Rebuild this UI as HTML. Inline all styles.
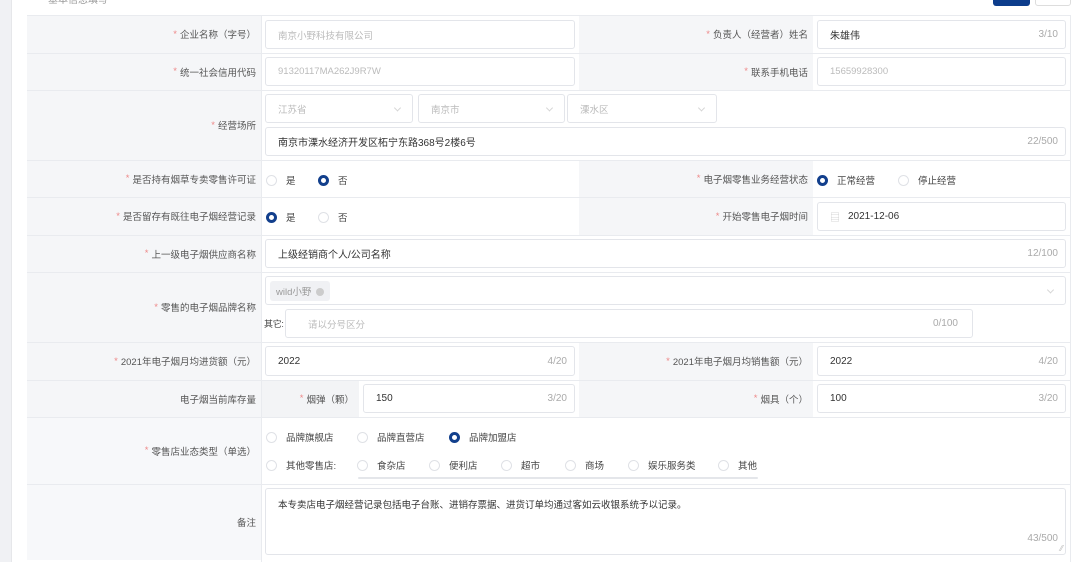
<!DOCTYPE html>
<html><head><meta charset="utf-8"><style>
*{margin:0;padding:0;box-sizing:border-box}
body{width:1080px;height:562px;overflow:hidden;background:#fff;font-family:"Liberation Sans","Noto Sans CJK SC",sans-serif;font-size:10px;color:#333;position:relative}
.a{position:absolute}
.lb{position:absolute;background:#f5f6f8;display:flex;align-items:center;justify-content:flex-end;padding-right:5px;color:#555;font-size:9.5px;white-space:nowrap}
.st{color:#e88;margin-right:3px}
.hl{position:absolute;height:1px;background:#e9ebef}
.vl{position:absolute;width:1px;background:#e9ebef}
.in{position:absolute;background:#fff;border:1px solid #e3e5ea;border-radius:3px;display:flex;align-items:center;padding:0 12px;font-size:10px;color:#333}
.ph{color:#bbb;font-size:9.5px}
.cnt{position:absolute;right:7px;color:#aaa;font-size:10px}
.chev{position:absolute;right:12px;top:50%;width:5px;height:5px;border-right:1px solid #d6d6d6;border-bottom:1px solid #d6d6d6;transform:translateY(-70%) rotate(45deg)}
.r{position:absolute;display:flex;align-items:center;font-size:9.5px;color:#444;white-space:nowrap}
.r i{display:inline-block;width:11px;height:11px;border-radius:50%;border:1px solid #dfe1e6;margin-right:9px;background:#fff}
.r i.on{border:3.5px solid #123f8c;background:#fff}
</style></head><body>
<div class="a" style="left:0;top:0;width:11px;height:562px;background:#f0f1f4"></div>
<div class="vl" style="left:11px;top:0;height:562px;background:#e6e7ea"></div>
<div class="a" style="left:48px;top:-9px;font-size:10px;color:#999">基本信息填写</div>
<div class="a" style="left:993px;top:-4px;width:37px;height:10px;background:#0d3d8c;border-radius:3px"></div>
<div class="a" style="left:1035px;top:-4px;width:36px;height:10px;border:1px solid #ddd;border-radius:3px"></div>

<div class="lb" style="left:27px;top:15px;width:234px;height:38px"><span class="st">*</span>企业名称（字号）</div>
<div class="lb" style="left:579px;top:15px;width:234px;height:38px"><span class="st">*</span>负责人（经营者）姓名</div>
<div class="lb" style="left:27px;top:53px;width:234px;height:37px"><span class="st">*</span>统一社会信用代码</div>
<div class="lb" style="left:579px;top:53px;width:234px;height:37px"><span class="st">*</span>联系手机电话</div>
<div class="lb" style="left:27px;top:90px;width:234px;height:70px"><span class="st">*</span>经营场所</div>
<div class="lb" style="left:27px;top:160px;width:234px;height:37px"><span class="st">*</span>是否持有烟草专卖零售许可证</div>
<div class="lb" style="left:579px;top:160px;width:234px;height:37px"><span class="st">*</span>电子烟零售业务经营状态</div>
<div class="lb" style="left:27px;top:197px;width:234px;height:38px"><span class="st">*</span>是否留存有既往电子烟经营记录</div>
<div class="lb" style="left:579px;top:197px;width:234px;height:38px"><span class="st">*</span>开始零售电子烟时间</div>
<div class="lb" style="left:27px;top:235px;width:234px;height:37px"><span class="st">*</span>上一级电子烟供应商名称</div>
<div class="lb" style="left:27px;top:272px;width:234px;height:70px"><span class="st">*</span>零售的电子烟品牌名称</div>
<div class="lb" style="left:27px;top:342px;width:234px;height:38px"><span class="st">*</span>2021年电子烟月均进货额（元）</div>
<div class="lb" style="left:579px;top:342px;width:234px;height:38px"><span class="st">*</span>2021年电子烟月均销售额（元）</div>
<div class="lb" style="left:27px;top:380px;width:234px;height:37px">电子烟当前库存量</div>
<div class="lb" style="left:261px;top:380px;width:98px;height:37px;background:#f3f4f6"><span class="st">*</span>烟弹（颗）</div>
<div class="lb" style="left:579px;top:380px;width:234px;height:37px"><span class="st">*</span>烟具（个）</div>
<div class="lb" style="left:27px;top:417px;width:234px;height:67px;background:#f7f8fa"><span class="st">*</span>零售店业态类型（单选）</div>
<div class="lb" style="left:27px;top:484px;width:234px;height:76px;background:#f7f8fa">备注</div>

<div class="hl" style="left:27px;top:15px;width:1044px"></div>
<div class="hl" style="left:27px;top:53px;width:1044px"></div>
<div class="hl" style="left:27px;top:90px;width:1044px"></div>
<div class="hl" style="left:27px;top:160px;width:1044px"></div>
<div class="hl" style="left:27px;top:197px;width:1044px"></div>
<div class="hl" style="left:27px;top:235px;width:1044px"></div>
<div class="hl" style="left:27px;top:272px;width:1044px"></div>
<div class="hl" style="left:27px;top:342px;width:1044px"></div>
<div class="hl" style="left:27px;top:380px;width:1044px"></div>
<div class="hl" style="left:27px;top:417px;width:1044px"></div>
<div class="hl" style="left:27px;top:484px;width:1044px"></div>
<div class="vl" style="left:261px;top:15px;height:547px"></div>
<div class="vl" style="left:1070px;top:15px;height:547px"></div>

<div class="in" style="left:265px;top:20px;width:310px;height:29px"><span class="ph">南京小野科技有限公司</span></div>
<div class="in" style="left:817px;top:20px;width:249px;height:29px">朱雄伟<span class="cnt">3/10</span></div>
<div class="in" style="left:265px;top:57px;width:310px;height:29px"><span class="ph">91320117MA262J9R7W</span></div>
<div class="in" style="left:817px;top:57px;width:249px;height:29px"><span class="ph">15659928300</span></div>
<div class="in" style="left:265px;top:94px;width:148px;height:29px"><span class="ph">江苏省</span><span class="chev"></span></div>
<div class="in" style="left:418px;top:94px;width:147px;height:29px"><span class="ph">南京市</span><span class="chev"></span></div>
<div class="in" style="left:567px;top:94px;width:150px;height:29px"><span class="ph">溧水区</span><span class="chev"></span></div>
<div class="in" style="left:265px;top:127px;width:801px;height:29px">南京市溧水经济开发区柘宁东路368号2楼6号<span class="cnt">22/500</span></div>
<div class="r" style="left:266px;top:173px"><i></i>是</div>
<div class="r" style="left:318px;top:173px"><i class="on"></i>否</div>
<div class="r" style="left:817px;top:173px"><i class="on"></i>正常经营</div>
<div class="r" style="left:898px;top:173px"><i></i>停止经营</div>
<div class="r" style="left:266px;top:210px"><i class="on"></i>是</div>
<div class="r" style="left:318px;top:210px"><i></i>否</div>
<div class="in" style="left:817px;top:202px;width:249px;height:29px"><span style="color:#ccc;margin-right:8px">▤</span>2021-12-06</div>
<div class="in" style="left:265px;top:239px;width:801px;height:29px">上级经销商个人/公司名称<span class="cnt">12/100</span></div>
<div class="in" style="left:265px;top:276px;width:801px;height:29px;padding-left:4px"><span style="background:#f0f1f4;border-radius:3px;padding:3px 6px;color:#999;font-size:9.5px">wild小野 <span style="display:inline-block;width:8px;height:8px;border-radius:50%;background:#ccc;vertical-align:-1px;margin-left:2px"></span></span><span class="chev"></span></div>
<div class="a" style="left:264px;top:317px;font-size:9px;color:#444;letter-spacing:-0.3px">其它:</div>
<div class="in" style="left:285px;top:309px;width:688px;height:29px;padding-left:22px"><span class="ph">请以分号区分</span><span class="cnt" style="right:14px">0/100</span></div>
<div class="in" style="left:265px;top:346px;width:310px;height:30px">2022<span class="cnt">4/20</span></div>
<div class="in" style="left:817px;top:346px;width:249px;height:30px">2022<span class="cnt">4/20</span></div>
<div class="in" style="left:363px;top:384px;width:212px;height:29px">150<span class="cnt">3/20</span></div>
<div class="in" style="left:817px;top:384px;width:249px;height:29px">100<span class="cnt">3/20</span></div>
<div class="r" style="left:266px;top:430px"><i></i>品牌旗舰店</div>
<div class="r" style="left:357px;top:430px"><i></i>品牌直营店</div>
<div class="r" style="left:449px;top:430px"><i class="on"></i>品牌加盟店</div>
<div class="r" style="left:266px;top:458px"><i></i>其他零售店:</div>
<div class="r" style="left:357px;top:458px"><i></i>食杂店</div>
<div class="r" style="left:429px;top:458px"><i></i>便利店</div>
<div class="r" style="left:501px;top:458px"><i></i>超市</div>
<div class="r" style="left:565px;top:458px"><i></i>商场</div>
<div class="r" style="left:628px;top:458px"><i></i>娱乐服务类</div>
<div class="r" style="left:718px;top:458px"><i></i>其他</div>
<div class="a" style="left:358px;top:477px;width:400px;height:2px;background:#e4e6ea;border-radius:1px"></div>
<div class="in" style="left:265px;top:488px;width:801px;height:67px;align-items:flex-start;padding-top:8px;font-size:9.5px">本专卖店电子烟经营记录包括电子台账、进销存票据、进货订单均通过客如云收银系统予以记录。<span class="cnt" style="top:44px">43/500</span><span class="a" style="right:2px;bottom:1px;color:#bbb;font-size:8px">⁄⁄</span></div>
</body></html>
